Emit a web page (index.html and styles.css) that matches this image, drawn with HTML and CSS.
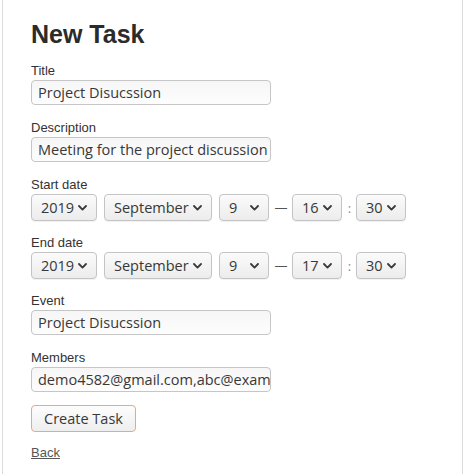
FILE: index.html
```html
<!DOCTYPE html>
<html lang="en">
<head>
<meta charset="utf-8">
<title>New Task</title>
<link rel="stylesheet" href="styles.css">
</head>
<body>
<div class="frame">
  <h1 class="title">New Task</h1>
  <form class="task-form">
    <div class="field">
      <label class="label">Title</label>
      <div class="input">Project Disucssion</div>
    </div>
    <div class="field">
      <label class="label">Description</label>
      <div class="input">Meeting for the project discussion</div>
    </div>
    <div class="field field-select">
      <label class="label">Start date</label>
      <div class="date-row">
        <div class="select w-year"><span>2019</span><svg class="chev" width="9" height="6" viewBox="0 0 9 6"><path d="M1 1 L4.5 4.6 L8 1" fill="none" stroke="#3a3a3a" stroke-width="1.8" stroke-linecap="round" stroke-linejoin="round"/></svg></div>
        <div class="select w-month"><span>September</span><svg class="chev" width="9" height="6" viewBox="0 0 9 6"><path d="M1 1 L4.5 4.6 L8 1" fill="none" stroke="#3a3a3a" stroke-width="1.8" stroke-linecap="round" stroke-linejoin="round"/></svg></div>
        <div class="select w-small"><span>9</span><svg class="chev" width="9" height="6" viewBox="0 0 9 6"><path d="M1 1 L4.5 4.6 L8 1" fill="none" stroke="#3a3a3a" stroke-width="1.8" stroke-linecap="round" stroke-linejoin="round"/></svg></div>
        <span class="dash">—</span>
        <div class="select w-small"><span>16</span><svg class="chev" width="9" height="6" viewBox="0 0 9 6"><path d="M1 1 L4.5 4.6 L8 1" fill="none" stroke="#3a3a3a" stroke-width="1.8" stroke-linecap="round" stroke-linejoin="round"/></svg></div>
        <span class="colon">:</span>
        <div class="select w-small"><span>30</span><svg class="chev" width="9" height="6" viewBox="0 0 9 6"><path d="M1 1 L4.5 4.6 L8 1" fill="none" stroke="#3a3a3a" stroke-width="1.8" stroke-linecap="round" stroke-linejoin="round"/></svg></div>
      </div>
    </div>
    <div class="field field-select">
      <label class="label">End date</label>
      <div class="date-row">
        <div class="select w-year"><span>2019</span><svg class="chev" width="9" height="6" viewBox="0 0 9 6"><path d="M1 1 L4.5 4.6 L8 1" fill="none" stroke="#3a3a3a" stroke-width="1.8" stroke-linecap="round" stroke-linejoin="round"/></svg></div>
        <div class="select w-month"><span>September</span><svg class="chev" width="9" height="6" viewBox="0 0 9 6"><path d="M1 1 L4.5 4.6 L8 1" fill="none" stroke="#3a3a3a" stroke-width="1.8" stroke-linecap="round" stroke-linejoin="round"/></svg></div>
        <div class="select w-small"><span>9</span><svg class="chev" width="9" height="6" viewBox="0 0 9 6"><path d="M1 1 L4.5 4.6 L8 1" fill="none" stroke="#3a3a3a" stroke-width="1.8" stroke-linecap="round" stroke-linejoin="round"/></svg></div>
        <span class="dash">—</span>
        <div class="select w-small"><span>17</span><svg class="chev" width="9" height="6" viewBox="0 0 9 6"><path d="M1 1 L4.5 4.6 L8 1" fill="none" stroke="#3a3a3a" stroke-width="1.8" stroke-linecap="round" stroke-linejoin="round"/></svg></div>
        <span class="colon">:</span>
        <div class="select w-small"><span>30</span><svg class="chev" width="9" height="6" viewBox="0 0 9 6"><path d="M1 1 L4.5 4.6 L8 1" fill="none" stroke="#3a3a3a" stroke-width="1.8" stroke-linecap="round" stroke-linejoin="round"/></svg></div>
      </div>
    </div>
    <div class="field">
      <label class="label">Event</label>
      <div class="input">Project Disucssion</div>
    </div>
    <div class="field">
      <label class="label">Members</label>
      <div class="input">demo4582@gmail.com,abc@example.com</div>
    </div>
    <div class="actions">
      <button type="button" class="button">Create Task</button>
    </div>
  </form>
  <a class="back" href="#">Back</a>
</div>
</body>
</html>
```

FILE: styles.css
```css
html, body {
  margin: 0;
  padding: 0;
  background: #ffffff;
}

.frame {
  box-sizing: border-box;
  width: 461px;
  min-height: 474px;
  margin-left: 2px;
  border-left: 1px solid #dcdcdc;
  border-right: 1px solid #dcdcdc;
  padding: 19px 0 0 28px;
  font-family: "Liberation Sans", Arial, sans-serif;
  color: #333333;
}

.title {
  margin: 0 0 14px 0;
  font-size: 25px;
  line-height: 30px;
  font-weight: bold;
  color: #2b2b2b;
}

.task-form {
  margin: 0;
}

.field {
  display: flex;
  flex-direction: column;
  margin-bottom: 15px;
}

.field-select {
  margin-bottom: 14px;
}

.label {
  font-size: 13px;
  line-height: 15px;
  color: #333333;
  margin-bottom: 2px;
}

.input {
  box-sizing: border-box;
  width: 240px;
  height: 25px;
  padding: 0 6px;
  border: 1px solid #c6c6c6;
  border-radius: 4px;
  background: linear-gradient(#f6f6f6, #fdfdfd);
  font-family: "Open Sans", sans-serif;
  font-size: 14.5px;
  line-height: 23px;
  color: #383838;
  white-space: nowrap;
  overflow: hidden;
}

.date-row {
  display: flex;
  align-items: center;
}

.select {
  box-sizing: border-box;
  height: 27px;
  display: flex;
  align-items: center;
  justify-content: space-between;
  padding: 0 9px 0 9px;
  margin-right: 7px;
  border: 1px solid #c4c4c4;
  border-radius: 4px;
  background: linear-gradient(#fbfbfb, #ececec);
  box-shadow: 0 1px 1px rgba(0, 0, 0, 0.06);
  font-family: "Open Sans", sans-serif;
  font-size: 14.5px;
  color: #383838;
}

.chev {
  display: block;
  flex: none;
}

.w-year {
  width: 66px;
}

.w-month {
  width: 108px;
}

.w-small {
  width: 50px;
}

.dash {
  width: 12px;
  margin-right: 5px;
  margin-left: -1px;
  font-size: 12px;
  line-height: 12px;
  color: #555555;
  text-align: center;
}

.colon {
  width: 5px;
  margin-left: -2px;
  margin-right: 4px;
  font-family: "Open Sans", sans-serif;
  font-size: 13px;
  color: #8a8a8a;
  text-align: center;
}

.actions {
  margin-top: -2px;
}

.button {
  box-sizing: border-box;
  width: 105px;
  height: 27px;
  padding: 0;
  border: 1px solid #e3a88f;
  border-radius: 4px;
  background: linear-gradient(#fdfdfd, #eeeeee);
  font-family: "Open Sans", sans-serif;
  font-size: 14.5px;
  color: #383838;
}

.back {
  display: inline-block;
  margin-top: 13px;
  font-size: 13px;
  line-height: 15px;
  color: #555555;
  text-decoration: underline;
}
```
